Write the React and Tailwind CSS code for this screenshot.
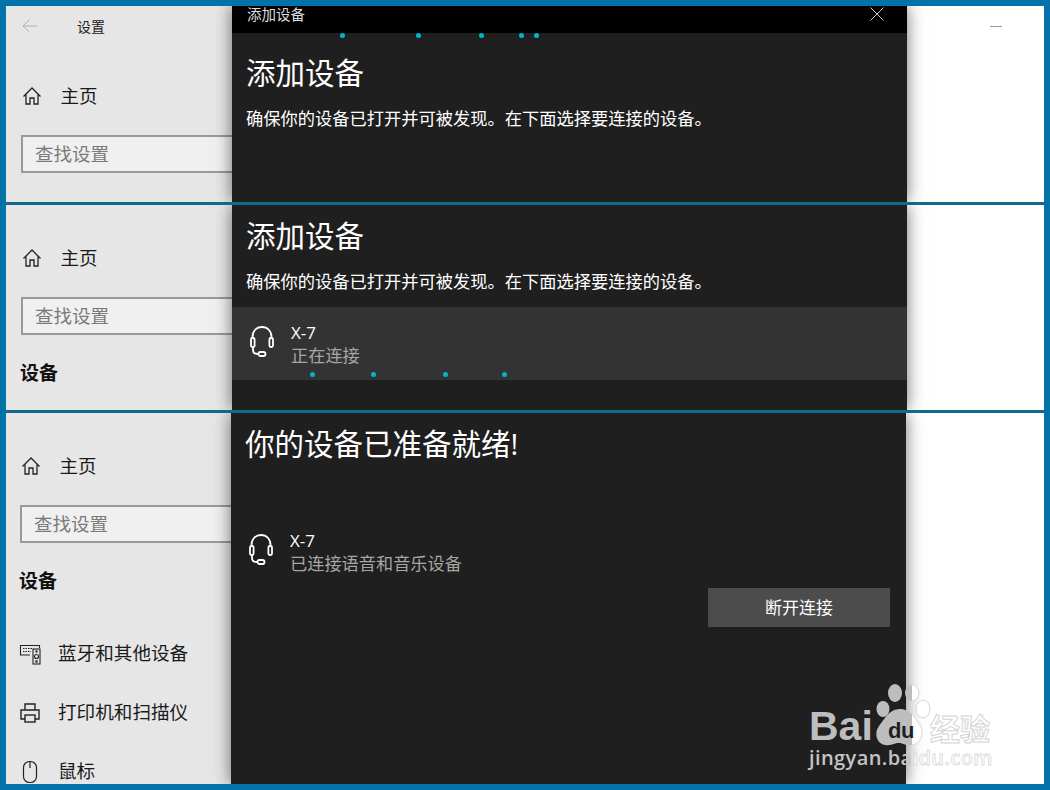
import React from "react";

function HomeIcon() {
  return (
    <svg width="20" height="20" viewBox="0 0 20 20" fill="none" stroke="#222" strokeWidth="1.3">
      <path d="M1.500 10.500 10 2l8.500 8.500" />
      <path d="M4 8.500V18h4v-6h4v6h4V8.500" />
    </svg>
  );
}

function Headset() {
  return (
    <svg width="24" height="31" viewBox="0 0 24 31" fill="none" stroke="#fff" strokeWidth="1.8">
      <path d="M2.500 12V11C2.500 5 6.500 1 12 1S21.500 5 21.500 11V12" />
      <rect x="1" y="12" width="3.600" height="9" rx="1.500" />
      <rect x="19.400" y="12" width="3.600" height="9" rx="1.500" />
      <path d="M3 21V24C3 26.500 4.500 28 7.500 28H8.500" />
      <rect x="8.500" y="26" width="7" height="4" rx="2" />
    </svg>
  );
}

function KeyboardIcon() {
  return (
    <svg width="22" height="22" viewBox="0 0 22 22" fill="none" stroke="#222" strokeWidth="1.1">
      <path d="M11 12H1.500V2.500H20.500V5" />
      <path d="M4 5.500h10M4 8.500h8" strokeDasharray="1.500 1" />
      <rect x="14" y="6" width="7" height="15" />
      <circle cx="17.500" cy="13.500" r="2" />
      <circle cx="17.500" cy="18.500" r="0.800" />
      <circle cx="17.500" cy="8.500" r="0.600" />
    </svg>
  );
}

function PrinterIcon() {
  return (
    <svg width="22" height="22" viewBox="0 0 22 22" fill="none" stroke="#222" strokeWidth="1.4">
      <path d="M6 8V2h10v6" />
      <path d="M6 17H2V8h18v9h-4" />
      <rect x="6" y="13" width="10" height="7" />
    </svg>
  );
}

function MouseIcon() {
  return (
    <svg width="22" height="24" viewBox="0 0 22 24" fill="none" stroke="#222" strokeWidth="1.2">
      <rect x="4.500" y="1.500" width="13" height="21" rx="6" />
      <path d="M11 1.500V8" />
    </svg>
  );
}

function NavItem({ icon, label }) {
  return (
    <div className="flex h-[59px] items-center">
      <div className="-ml-[1px] flex w-[39px] items-center">{icon}</div>
      <span className="text-[18.600px] leading-none text-[#1a1a1a]">{label}</span>
    </div>
  );
}

function Sidebar({ header, narrow, items, section }) {
  return (
    <div
      className={
        narrow
          ? "h-full w-[225px] shrink-0 overflow-hidden bg-[#e6e6e6] pl-[14px]"
          : "h-full w-[226px] shrink-0 overflow-hidden bg-[#e6e6e6] pl-[15px]"
      }
    >
      {header ? (
        <div className="mb-[30px] flex h-[40px] items-center">
          <svg width="16" height="14" viewBox="0 0 16 14" fill="none" stroke="#b0b0b0" strokeWidth="1" className="ml-[1px]">
            <path d="M15.500 7H1M7.500 .5 1 7l6.500 6.500" />
          </svg>
          <span className="ml-[39px] text-[14px] text-[#222]">设置</span>
        </div>
      ) : (
        <div className="h-[33px]" />
      )}
      <div className="flex h-[40px] items-center">
        <div className="flex w-[40px] items-center pl-[1px]">
          <HomeIcon />
        </div>
        <span className="-ml-[0.5px] text-[18.500px] leading-none text-[#1a1a1a]">主页</span>
      </div>
      <div className="mt-[19px] flex h-[38px] w-[260px] items-center border-2 border-[#999999] bg-[#f0f0f0] pl-[12px]">
        <span className="text-[18.500px] leading-none text-[#7a7a7a]">查找设置</span>
      </div>
      {section && (
        <div className="mt-[23px] -ml-[1px] flex h-[30px] items-center text-[19px] font-bold text-[#111]">设备</div>
      )}
      {items && (
        <div className="mt-[28px] flex flex-col">
          <NavItem icon={<KeyboardIcon />} label="蓝牙和其他设备" />
          <NavItem icon={<PrinterIcon />} label="打印机和扫描仪" />
          <NavItem icon={<MouseIcon />} label="鼠标" />
        </div>
      )}
    </div>
  );
}

function Dot({ className }) {
  return <span className={"absolute h-[5px] w-[5px] rounded-full bg-[#00b7c8] " + className} />;
}

function Heading({ children }) {
  return <h2 className="-mt-[1px] flex h-[40px] items-center pl-[14px] text-[29.500px] leading-none font-normal text-white">{children}</h2>;
}

function Intro() {
  return (
    <p className="mt-[14px] flex h-[24px] items-center pl-[14px] text-[17.250px] leading-none whitespace-nowrap text-white">
      确保你的设备已打开并可被发现。在下面选择要连接的设备。
    </p>
  );
}

function DeviceRow({ status, active, className }) {
  return (
    <div className={"flex h-[73px] gap-[17px] pl-[18px] " + (active ? "bg-[#333333] " : "") + className}>
      <div className="pt-[19px]">
        <Headset />
      </div>
      <div className="pt-[14px]">
        <div className="h-[23px] text-[17px] leading-[23px] text-white">X-7</div>
        <div className="h-[23px] text-[17.200px] leading-[23px] text-[#a6a6a6]">{status}</div>
      </div>
    </div>
  );
}

function RightPane({ minimize }) {
  return (
    <div className="h-full flex-1 bg-white">
      {minimize && (
        <div className="flex justify-end pt-[20px] pr-[42px]">
          <div className="h-px w-[12px] bg-[#999999]" />
        </div>
      )}
    </div>
  );
}

function Modal({ children }) {
  return (
    <div className="relative z-10 h-full w-[675px] shrink-0 bg-[#1f1f1f] shadow-[0_0_16px_rgba(0,0,0,0.55)]">{children}</div>
  );
}

const PAW_BODY = "M88 29C98 29 102 37 106 42 113 50 111 63 100 65 93 66 91 63 87 63 82 63 80 66 73 65 64 63 62 53 67 46 72 40 77 29 88 29Z";

function Watermark() {
  return (
    <div className="pointer-events-none absolute top-[670px] left-[800px] z-20 h-[100px] w-[200px]">
      <svg width="200" height="74" viewBox="0 0 200 74" className="absolute top-0 left-0">
        <defs>
          <clipPath id="wm-left">
            <rect x="0" y="0" width="106" height="74" />
          </clipPath>
          <clipPath id="wm-right">
            <rect x="106" y="0" width="94" height="74" />
          </clipPath>
        </defs>
        <g clipPath="url(#wm-right)">
          <g transform="translate(6 4)" fill="#fff" stroke="#d6d6d6" strokeWidth="1">
            <ellipse cx="100" cy="13" rx="7" ry="8" />
            <ellipse cx="111" cy="29" rx="7" ry="9" />
            <path d={PAW_BODY} />
          </g>
        </g>
        <g clipPath="url(#wm-left)">
          <g transform="translate(6 4)" fill="#bdbdbd">
            <ellipse cx="83" cy="13" rx="7" ry="9" />
            <ellipse cx="100" cy="13" rx="7" ry="8" />
            <ellipse cx="71" cy="29" rx="6.500" ry="8" />
            <path d={PAW_BODY} />
          </g>
        </g>
      </svg>
      <span className="absolute top-[44px] left-[82px] font-['Liberation_Sans',sans-serif] text-[22px] leading-none font-bold tracking-[-0.5px] text-[#1f1f1f]">du</span>
      <span className="absolute top-[32px] left-[3px] font-['Liberation_Sans',sans-serif] text-[41px] leading-[36px] font-bold text-[#bdbdbd]">Bai</span>
      <span className="absolute top-[39px] left-[124px] text-[30px] leading-[28px] font-bold whitespace-nowrap text-white [-webkit-text-stroke:1px_#d4d4d4]">经验</span>
      <div className="absolute top-[70px] left-[3px] text-[20px] leading-[24px] font-semibold tracking-[0.4px] whitespace-nowrap">
        <span className="text-[#c4c4c4]">jingyan.ba</span>
        <span className="text-white [-webkit-text-stroke:0.8px_#d8d8d8]">idu.com</span>
      </div>
    </div>
  );
}

export default function App() {
  return (
    <div className="relative flex h-[790px] w-[1050px] flex-col overflow-hidden border-[6px] border-[#0272a8] font-['Open_Sans','Noto_Sans_CJK_SC',sans-serif]">
      <section className="flex h-[196px] shrink-0 overflow-hidden">
        <Sidebar header />
        <Modal>
          <div className="flex h-[27px] items-center justify-between bg-black pr-[22px] pl-[15px]">
            <span className="-mt-[9px] text-[14.500px] leading-none text-[#dddddd]">添加设备</span>
            <svg width="16" height="16" viewBox="0 0 16 16" stroke="#cccccc" strokeWidth="1" className="-mt-[11px]">
              <path d="M1.500 1.500l13 13M14.500 1.500l-13 13" />
            </svg>
          </div>
          <Dot className="top-[27px] left-[108px]" />
          <Dot className="top-[27px] left-[184px]" />
          <Dot className="top-[27px] left-[247px]" />
          <Dot className="top-[27px] left-[287px]" />
          <Dot className="top-[27px] left-[302px]" />
          <div className="h-[21px]" />
          <Heading>添加设备</Heading>
          <Intro />
        </Modal>
        <RightPane minimize />
      </section>
      <div className="h-[3px] shrink-0 bg-[#13688f]" />
      <section className="flex h-[205px] shrink-0 overflow-hidden">
        <Sidebar section />
        <Modal>
          <div className="h-[12px]" />
          <Heading>添加设备</Heading>
          <Intro />
          <DeviceRow status="正在连接" active className="mt-[13px]" />
          <Dot className="top-[167px] left-[78px]" />
          <Dot className="top-[167px] left-[139px]" />
          <Dot className="top-[167px] left-[211px]" />
          <Dot className="top-[167px] left-[270px]" />
        </Modal>
        <RightPane />
      </section>
      <div className="h-[3px] shrink-0 bg-[#13688f]" />
      <section className="flex min-h-0 flex-1 overflow-hidden">
        <Sidebar narrow section items />
        <Modal>
          <div className="h-[12px]" />
          <Heading>你的设备已准备就绪!</Heading>
          <DeviceRow status="已连接语音和音乐设备" className="mt-[51px]" />
          <div className="flex justify-end pr-[16px]">
            <div className="flex h-[39px] w-[182px] items-center justify-center bg-[#4c4c4c] text-[17px] leading-none text-white">
              断开连接
            </div>
          </div>
        </Modal>
        <RightPane />
      </section>
      <Watermark />
    </div>
  );
}
